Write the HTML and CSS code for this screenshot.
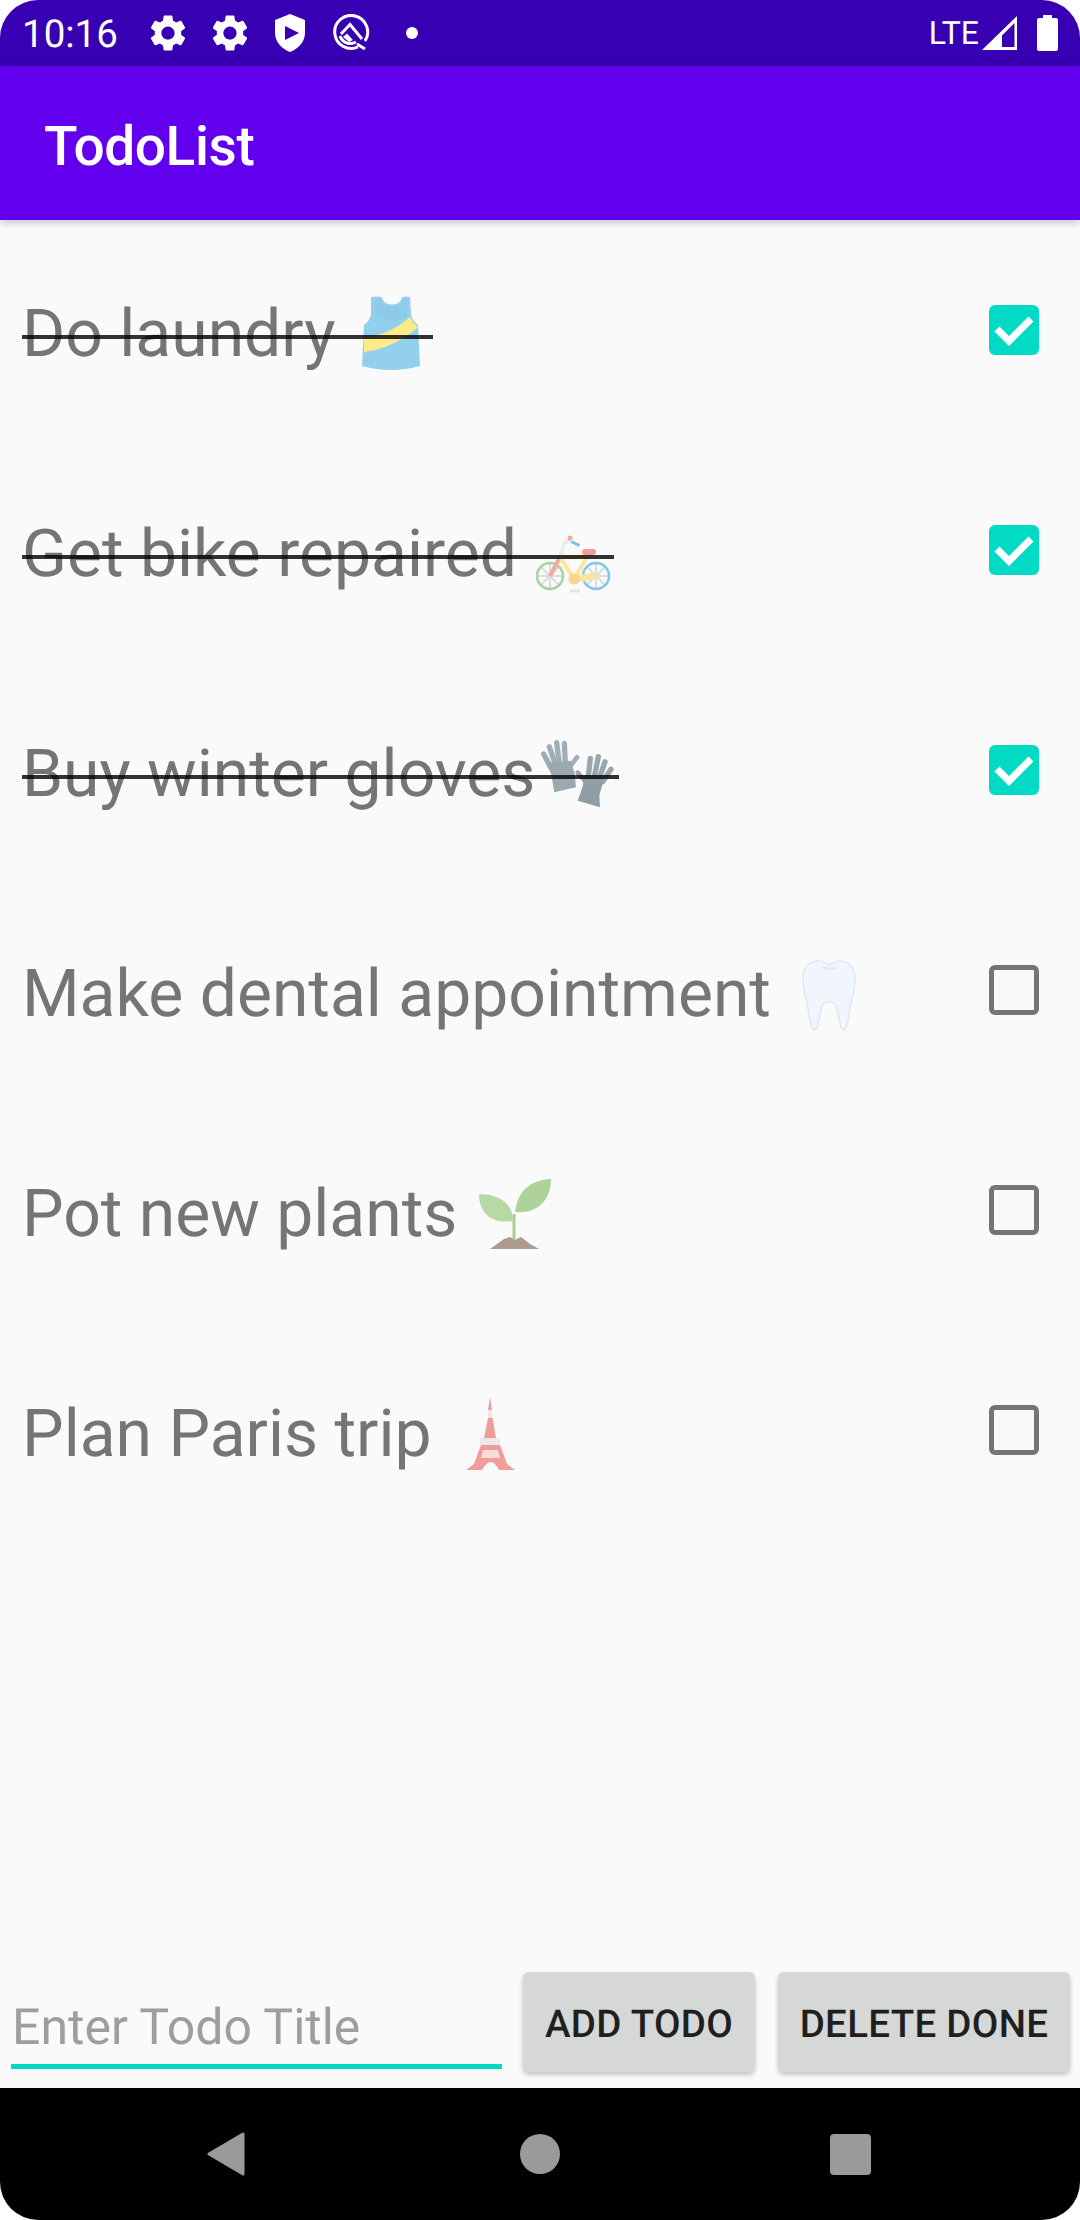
FILE: index.html
```html
<!DOCTYPE html>
<html lang="en">

<head>
    <meta charset="UTF-8">
    <meta name="viewport" content="width=device-width, initial-scale=1.0">
    <title>TodoList</title>
    <link rel="stylesheet" href="styles.css">
</head>

<body>
    <div class="screen">
        <div class="status-bar">
            <span class="clock">10:16</span>
            <svg class="status-gear first" viewBox="0 0 24 24"><use href="#gear"/></svg>
            <svg class="status-gear" viewBox="0 0 24 24"><path id="gear" d="M19.14 12.94c.04-.3.06-.61.06-.94 0-.32-.02-.64-.07-.94l2.03-1.58c.18-.14.23-.41.12-.61l-1.92-3.32c-.12-.22-.37-.29-.59-.22l-2.39.96c-.5-.38-1.03-.7-1.62-.94l-.36-2.54c-.04-.24-.24-.41-.48-.41h-3.84c-.24 0-.43.17-.47.41l-.36 2.54c-.59.24-1.13.57-1.62.94l-2.39-.96c-.22-.08-.47 0-.59.22L2.74 8.87c-.12.21-.08.47.12.61l2.03 1.58c-.05.3-.09.63-.09.94s.02.64.07.94l-2.03 1.58c-.18.14-.23.41-.12.61l1.92 3.32c.12.22.37.29.59.22l2.39-.96c.5.38 1.03.7 1.62.94l.36 2.54c.05.24.24.41.48.41h3.84c.24 0 .44-.17.47-.41l.36-2.54c.59-.24 1.13-.56 1.62-.94l2.39.96c.22.08.47 0 .59-.22l1.92-3.32c.12-.22.07-.47-.12-.61l-2.01-1.58zM12 15.6c-1.98 0-3.6-1.62-3.6-3.6s1.62-3.6 3.6-3.6 3.6 1.62 3.6 3.6-1.62 3.6-3.6 3.6z" fill="#fff"/></svg>
            <svg class="status-shield" viewBox="0 0 32 38"><path fill="#fff" fill-rule="evenodd" d="M16 0L31 6V19C31 28 24 35 16 38 8 35 1 28 1 19V6ZM11 12V26L25 19Z"/></svg>
            <svg class="status-q" viewBox="0 0 38 38" fill="none" stroke="#fff" stroke-width="3">
                <path d="M25 33A16.5 16.5 0 1 1 32 27"/>
                <path d="M23 28A11 11 0 0 1 7 22"/>
                <path d="M8 20L17 10.500 29 25"/>
                <path d="M10 23L14 19.500 20 26 16 28Z" fill="#fff" stroke="none"/>
                <path d="M24 30L32 35"/>
            </svg>
            <span class="status-dot"></span>
            <span class="network">LTE</span>
            <svg class="status-signal" viewBox="0 0 35 34"><path fill="#fff" fill-rule="evenodd" d="M35 0V34H0ZM32.5 7L20 19.500V31H32.5Z"/></svg>
            <svg class="status-battery" viewBox="0 0 21 36"><path fill="#fff" d="M6 0H15V3H19Q21 3 21 5V34Q21 36 19 36H2Q0 36 0 34V5Q0 3 2 3H6Z"/></svg>
        </div>

        <div class="app-bar">TodoList</div>

        <div class="todo-list">
            <div class="todo-row">
                <span class="todo-title done">Do laundry <svg class="emoji tight" viewBox="0 0 84 84">
                    <path fill="#93d0ee" d="M22 5Q27 4 33 5C34 15 52 15 53 5Q58 4 61 5L62 22Q63 29 69 33L71 74Q42 82 13 74L15 33Q21 29 22 22Z"/>
                    <path fill="#8ccbe9" d="M26 7H32C34 17 52 17 54 7H58V24Q43 34 27 24Z"/>
                    <path fill="#fdeb8a" d="M61 25Q64 31 69 35 45 56 15 60V46Q42 42 61 25Z"/>
                </svg></span>
                <div class="check on"><svg viewBox="0 0 50 50"><path d="M8 24L20 36 42 14" fill="none" stroke="#fff" stroke-width="7"/></svg></div>
            </div>
            <div class="todo-row">
                <span class="todo-title done">Get bike repaired <svg class="emoji tight" viewBox="0 0 84 84">
                    <g fill="none" stroke-width="2" stroke="#dcdcdc">
                        <path d="M20 50V78M6 64H34M10 54L30 74M30 54L10 74"/>
                        <path d="M66 50V78M52 64H80M56 54L76 74M76 54L56 74"/>
                    </g>
                    <circle cx="20" cy="64" r="13" fill="none" stroke="#a3d49b" stroke-width="2.5"/>
                    <circle cx="66" cy="64" r="13" fill="none" stroke="#80c6ee" stroke-width="2.5"/>
                    <path d="M30 45L20 64" stroke="#f3a8a2" stroke-width="4" fill="none"/>
                    <path d="M30 45L44 67M30 45H58M59 42L44 67" stroke="#fce59c" stroke-width="4" fill="none"/>
                    <path d="M44 67L66 64" stroke="#fce59c" stroke-width="7" fill="none"/>
                    <circle cx="44" cy="67" r="5.500" fill="#fad48a"/>
                    <path d="M40 79H50" stroke="#e4e4e4" stroke-width="3"/>
                    <path d="M30 45L34 32Q36 28 42 30" stroke="#ebebeb" stroke-width="3.500" fill="none"/>
                    <path d="M42 28.500L50 32 49 35 41 31Z" fill="#78c2ea"/>
                    <circle cx="40" cy="26" r="2.500" fill="#f3a8a2"/>
                    <rect x="52" y="37" width="14" height="6" rx="3" fill="#f29c97"/>
                </svg></span>
                <div class="check on"><svg viewBox="0 0 50 50"><path d="M8 24L20 36 42 14" fill="none" stroke="#fff" stroke-width="7"/></svg></div>
            </div>
            <div class="todo-row">
                <span class="todo-title done">Buy winter gloves<svg class="emoji" viewBox="12 6 252 252">
                    <g stroke="#a0afb6" stroke-width="16" stroke-linecap="round" fill="none">
                        <path d="M38 72L58 110M55 50L72 100M77 38L85 100M100 40L103 100"/>
                        <path d="M138 82L115 112" stroke-width="14"/>
                    </g>
                    <path fill="#9aa8af" d="M45 100L118 92 130 125 135 172 70 187 60 130Z"/>
                    <g stroke="#98a6ad" stroke-width="16" stroke-linecap="round" fill="none">
                        <path d="M178 85L172 140M202 80L190 140M222 95L205 145M240 118L215 155"/>
                        <path d="M140 128L160 150" stroke-width="14"/>
                    </g>
                    <path fill="#8f9da4" d="M160 135L220 145 205 195 207 232 140 212 155 170Z"/>
                </svg></span>
                <div class="check on"><svg viewBox="0 0 50 50"><path d="M8 24L20 36 42 14" fill="none" stroke="#fff" stroke-width="7"/></svg></div>
            </div>
            <div class="todo-row">
                <span class="todo-title">Make dental appointment <svg class="emoji snug" viewBox="0 0 84 84">
                    <path fill="#f1f5fc" stroke="#dfe7f6" stroke-width="1.500" d="M20 15C27 6 38 9 43 13 48 9 59 6 66 15 72 24 68 40 65 50 63 62 62 76 58 78 54 80 53 62 50 54 48 48 38 48 36 54 33 62 32 80 28 78 24 76 23 62 21 50 18 40 14 24 20 15Z"/>
                    <path fill="none" stroke="#dfe7f6" stroke-width="2" d="M36 15Q44 18 52 16"/>
                </svg></span>
                <div class="check"></div>
            </div>
            <div class="todo-row">
                <span class="todo-title">Pot new plants <svg class="emoji tight" viewBox="0 0 84 84">
                    <path d="M43 42V68" stroke="#a8d08e" stroke-width="3" fill="none"/>
                    <path fill="#aed39a" d="M80 7C62 8 47 16 44 40 62 42 80 32 80 7Z"/>
                    <path fill="#b7d9a5" d="M8 22C26 22 42 30 42 49 24 52 8 44 8 22Z"/>
                    <path fill="#ad9a90" d="M19 77L33 67 39 65 44 68 50 65 59 72 68 77Z"/>
                </svg></span>
                <div class="check"></div>
            </div>
            <div class="todo-row">
                <span class="todo-title">Plan Paris trip <svg class="emoji snug" viewBox="0 0 84 84">
                    <path fill="#f29c9a" d="M43 5L45 18H41ZM41 26H45.500L49 46H37ZM34 53H53L60 72 68 78H52Q44 62 35 78H19L27 72Z"/>
                    <path fill="#eaeaea" d="M41 18H45L45.500 26H41ZM33 46H53V53H33Z"/>
                    <path fill="#fbdcdc" d="M36 58H51L53 66H34Z"/>
                </svg></span>
                <div class="check"></div>
            </div>
        </div>

        <div class="composer">
            <div class="title-field"><span class="placeholder">Enter Todo Title</span></div>
            <div class="btn btn-add">ADD TODO</div>
            <div class="btn btn-delete">DELETE DONE</div>
        </div>

        <div class="nav-bar">
            <svg class="nav-back" viewBox="0 0 38 44"><path fill="#9a9a9a" stroke="#9a9a9a" stroke-width="3" stroke-linejoin="round" d="M2 22L36 2V42Z"/></svg>
            <span class="nav-home"></span>
            <span class="nav-recent"></span>
        </div>
    </div>
</body>

</html>
```

FILE: styles.css
```css
body {
    margin: 0;
    padding: 0;
    background-color: #fff;
    font-family: Roboto, "Noto Sans", sans-serif;
    text-rendering: geometricPrecision;
}

.screen {
    width: 1080px;
    height: 2220px;
    display: flex;
    flex-direction: column;
    overflow: hidden;
    border-radius: 38px;
    background-color: #fafafa;
}

.status-bar {
    height: 66px;
    display: flex;
    align-items: center;
    padding: 0 22px 0 22px;
    background-color: #3700b3;
    color: #fff;
}

.clock {
    width: 94px;
    padding-top: 2px;
    font-size: 38.5px;
}

.status-gear {
    width: 44px;
    height: 44px;
    margin-left: 18px;
}

.status-gear.first {
    margin-left: 30px;
}

.status-shield {
    width: 32px;
    height: 38px;
    margin-left: 22px;
}

.status-q {
    width: 38px;
    height: 38px;
    margin-left: 27px;
}

.status-dot {
    width: 12px;
    height: 12px;
    margin-left: 35px;
    border-radius: 50%;
    background-color: #fff;
}

.network {
    margin-left: auto;
    font-size: 32px;
}

.status-signal {
    width: 35px;
    height: 34px;
    margin-left: 3px;
}

.status-battery {
    width: 21px;
    height: 36px;
    margin-left: 20px;
}

.app-bar {
    height: 154px;
    box-sizing: border-box;
    display: flex;
    align-items: center;
    padding: 8px 0 0 44px;
    background-color: #6200ee;
    color: #fff;
    font-size: 55px;
    font-weight: 500;
    letter-spacing: -0.4px;
    box-shadow: 0 3px 8px rgba(0, 0, 0, 0.2);
    position: relative;
}

.todo-row {
    height: 220px;
    display: flex;
    align-items: center;
    justify-content: space-between;
    padding: 0 41px 0 22px;
}

.todo-title {
    position: relative;
    padding-top: 8px;
    font-size: 66px;
    line-height: 84px;
    color: #757575;
    white-space: pre;
}

.todo-title.done::after {
    content: "";
    position: absolute;
    left: 0;
    right: 0;
    top: 51px;
    height: 4px;
    background-color: rgba(0, 0, 0, 0.8);
}

.emoji {
    width: 84px;
    height: 84px;
    vertical-align: -20px;
}

.emoji.tight {
    margin-left: -3px;
}

.emoji.snug {
    margin-left: -1px;
}

.check {
    width: 50px;
    height: 50px;
    box-sizing: border-box;
    border: 5.5px solid #757575;
    border-radius: 6px;
}

.check.on {
    border: none;
    background-color: #03dac5;
}

.check svg {
    display: block;
}

.composer {
    display: flex;
    align-items: flex-end;
    margin-top: auto;
    padding: 0 10px 16px 11px;
}

.title-field {
    width: 491px;
    height: 91px;
    box-sizing: border-box;
    padding: 21px 0 0 1px;
    border-bottom: 5.5px solid #03dac5;
    margin-bottom: 3px;
}

.placeholder {
    font-size: 50px;
    line-height: 58px;
    color: #9e9e9e;
}

.btn {
    height: 100px;
    display: flex;
    align-items: center;
    justify-content: center;
    padding-top: 4px;
    box-sizing: border-box;
    background-color: #d6d7d7;
    border-radius: 6px;
    box-shadow: 0 3px 5px rgba(0, 0, 0, 0.22);
    color: #1f1f1f;
    font-size: 38.5px;
    font-weight: 500;
    letter-spacing: 0.3px;
}

.btn-add {
    width: 232px;
    margin-left: 21px;
}

.btn-delete {
    width: 292px;
    margin-left: 23px;
}

.nav-bar {
    height: 132px;
    display: flex;
    align-items: center;
    background-color: #000;
}

.nav-back {
    width: 38px;
    height: 44px;
    margin-left: 207px;
}

.nav-home {
    width: 40px;
    height: 40px;
    margin-left: 275px;
    border-radius: 50%;
    background-color: #9a9a9a;
}

.nav-recent {
    width: 41px;
    height: 41px;
    margin-left: 270px;
    border-radius: 4px;
    background-color: #9a9a9a;
}
```
